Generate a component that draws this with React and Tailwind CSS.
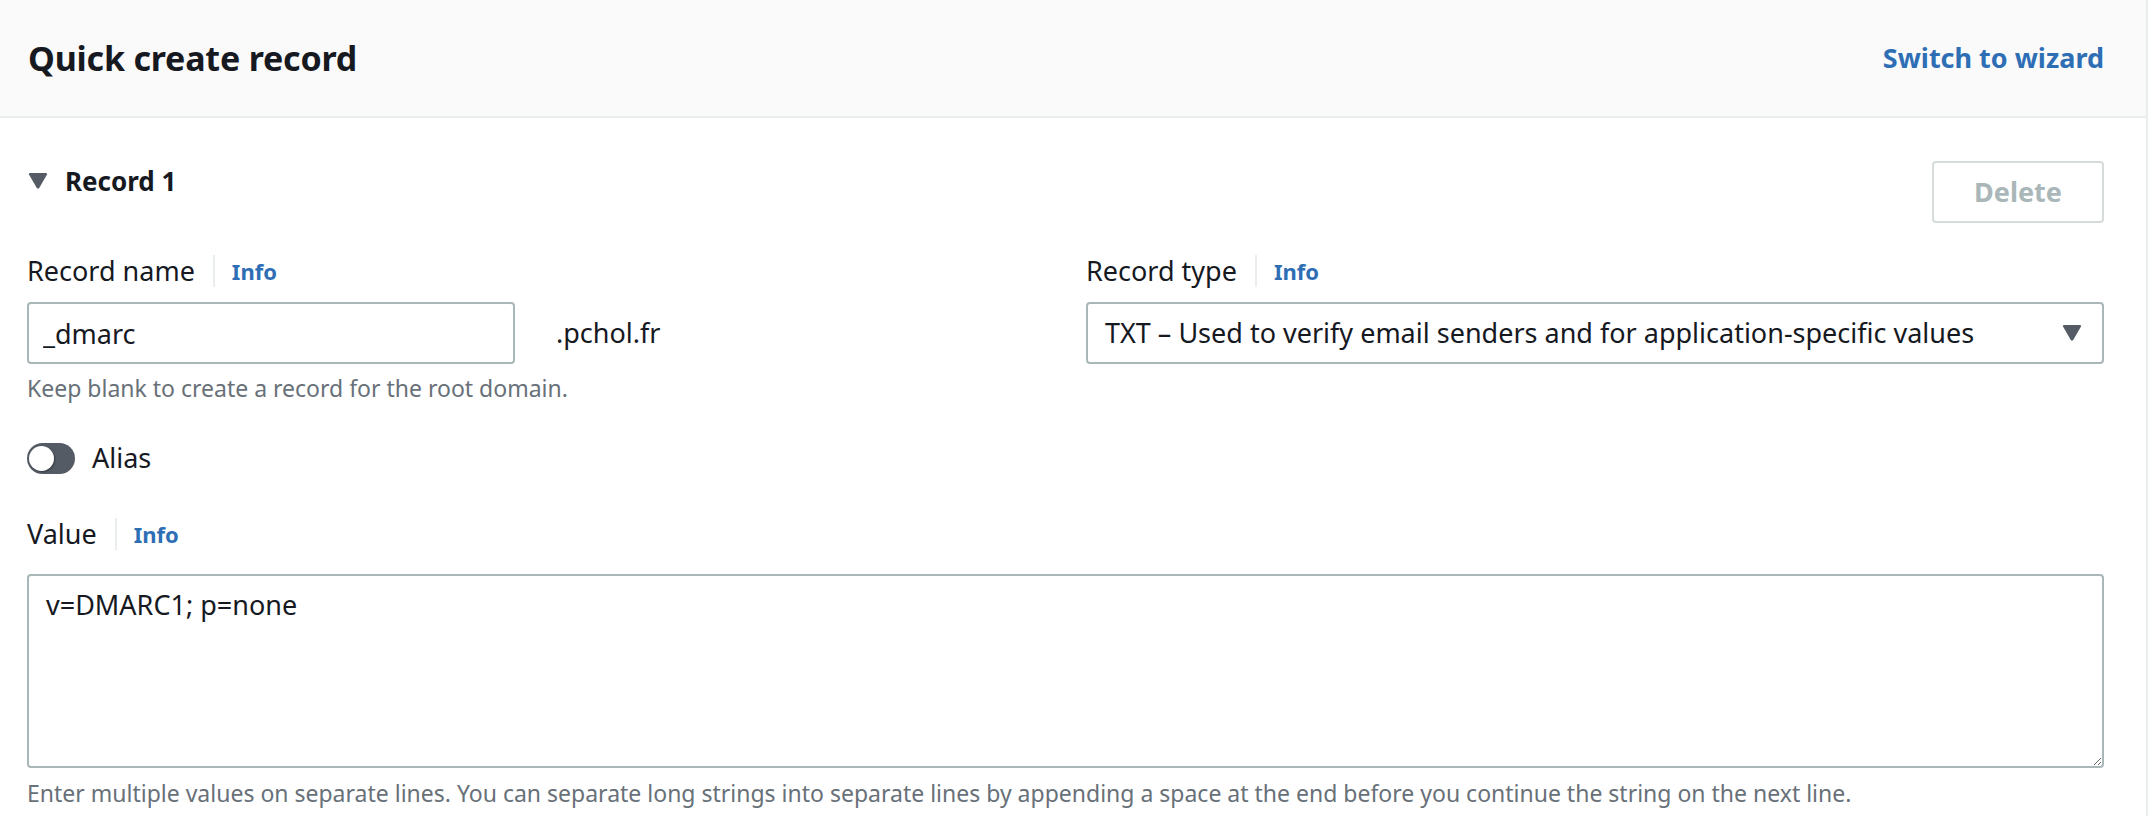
import { useState } from 'react'

const font = { fontFamily: '"Noto Sans", "Open Sans", Arial, sans-serif' }

export default function App() {
  const [alias, setAlias] = useState(false)

  return (
    <div style={font} className="h-[816px] w-[2150px] overflow-hidden bg-white text-[#16191f]">
      <div className="h-full w-[2148px] border-r-2 border-[#eaeded]">
        {/* Header */}
        <div className="flex h-[118px] items-center justify-between border-b-2 border-[#eaeded] bg-[#fafafa] pl-[28px] pr-[42px]">
          <h2 className="text-[34px] font-bold leading-[48px] tracking-[-0.2px]">Quick create record</h2>
          <a href="#" className="text-[27px] font-bold leading-[40px] text-[#2e6eb5]">
            Switch to wizard
          </a>
        </div>

        <div className="pl-[27px] pr-[42px]">
          {/* Record 1 */}
          <div className="flex items-start justify-between pt-[43px]">
            <div className="flex h-[40px] items-center pl-[1px]">
              <TriangleDown className="h-[16px] w-[20px] text-[#545b64]" />
              <span className="ml-[17px] text-[26px] font-bold leading-[40px]">Record 1</span>
            </div>
            <button
              disabled
              className="h-[62px] w-[172px] rounded-[4px] border-2 border-[#d5dbdb] bg-white text-[27px] font-bold text-[#aab7b8]"
            >
              Delete
            </button>
          </div>

          {/* Name + type */}
          <div className="mt-[28px] grid grid-cols-2 gap-x-[41px]">
            <div>
              <Label text="Record name" />
              <div className="mt-[11px] flex items-center">
                <input
                  type="text"
                  defaultValue="_dmarc"
                  className="h-[62px] w-[488px] rounded-[4px] border-2 border-[#aab7b8] bg-white pl-[14px] text-[27px] text-[#16191f] outline-none"
                />
                <span className="ml-[41px] text-[27px] leading-[40px]">.pchol.fr</span>
              </div>
              <p className="mt-[8px] text-[23px] leading-[32px] text-[#687078]">
                Keep blank to create a record for the root domain.
              </p>
            </div>
            <div>
              <Label text="Record type" />
              <div className="mt-[11px] flex h-[62px] items-center justify-between rounded-[4px] border-2 border-[#aab7b8] bg-white pl-[17px] pr-[20px]">
                <span className="text-[27px] leading-[40px]">
                  TXT – Used to verify email senders and for application-specific values
                </span>
                <TriangleDown className="h-[16px] w-[20px] text-[#545b64]" />
              </div>
            </div>
          </div>

          {/* Alias toggle */}
          <div className="mt-[34px] flex h-[40px] items-center">
            <button
              onClick={() => setAlias(!alias)}
              className={`flex h-[31px] w-[48px] items-center rounded-full px-[2px] ${
                alias ? 'justify-end bg-[#2e6eb5]' : 'justify-start bg-[#545b64]'
              }`}
            >
              <span className="h-[25px] w-[25px] rounded-full bg-white shadow-[1px_1px_2px_rgba(0,0,0,0.35)]" />
            </button>
            <span className="ml-[17px] text-[27px] leading-[40px]">Alias</span>
          </div>

          {/* Value */}
          <div className="mt-[36px]">
            <Label text="Value" />
            <textarea
              defaultValue="v=DMARC1; p=none"
              className="mt-[20px] block h-[194px] w-full resize-y rounded-[4px] border-2 border-[#aab7b8] bg-white pl-[17px] pt-[9px] text-[27px] leading-[40px] text-[#16191f] outline-none"
            />
            <p className="mt-[9px] text-[23px] leading-[32px] text-[#687078]">
              Enter multiple values on separate lines. You can separate long strings into separate lines by appending a space at the end before you continue the string on the next line.
            </p>
          </div>
        </div>
      </div>
    </div>
  )
}

function Label({ text }) {
  return (
    <div className="flex h-[40px] items-center">
      <span className="text-[27px] leading-[40px]">{text}</span>
      <span className="ml-[18px] h-[32px] w-[2px] bg-[#eaeded]" />
      <a href="#" className="ml-[17px] text-[22px] font-bold leading-[40px] text-[#2e6eb5]">
        Info
      </a>
    </div>
  )
}

function TriangleDown({ className }) {
  return (
    <svg className={className} viewBox="0 0 20 16" fill="currentColor">
      <path d="M1 1.5 Q0.6 0 2.2 0 H17.8 Q19.4 0 19 1.5 L11.2 15 Q10 16.6 8.8 15 Z" />
    </svg>
  )
}
